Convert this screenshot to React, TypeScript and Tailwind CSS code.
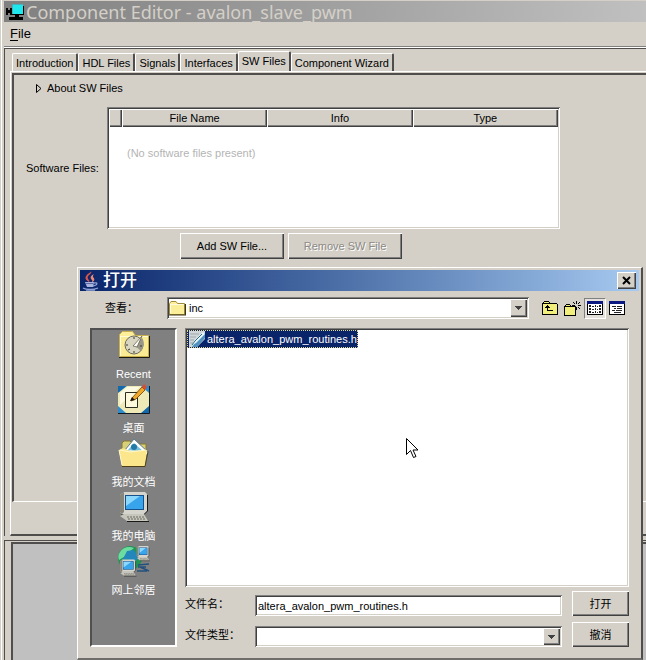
import type { ReactNode } from "react";
import { clsx } from "clsx";

const RAISED =
  "shadow-[inset_1px_1px_0_#fff,inset_-1px_-1px_0_#404040,inset_-2px_-2px_0_#808080]";
const SUNKEN =
  "shadow-[inset_1px_1px_0_#808080,inset_-1px_-1px_0_#fff,inset_2px_2px_0_#404040,inset_-2px_-2px_0_#d4d0c8]";

const tabs = ["Introduction", "HDL Files", "Signals", "Interfaces", "SW Files", "Component Wizard"];

function AppIcon() {
  return (
    <svg width="20" height="20" viewBox="0 0 20 20" shapeRendering="crispEdges" aria-hidden="true">
      <path d="M2 6h2v7H2zM4 8h3v3H4zM6 6h2v7H6zM11 12h4v3h-4zM5 15h14v3H5zM8 12h11v1H8zM19 4h1v9h-1z" fill="#000" />
      <path d="M8 2h11v10H8z" fill="#1ee8ee" />
      <path d="M8 2h11v1H8zM8 2h1v10H8z" fill="#3fb4bc" />
    </svg>
  );
}

function JavaIcon() {
  return (
    <svg width="18" height="20" viewBox="0 0 18 20" fill="none" aria-hidden="true">
      <path d="M9 0c2 3-5 4-3 8 1 1 2 2 1 3-3-2-5-4-2-7 1-2 4-2 4-4z" fill="#e0574a" />
      <path d="M12 3c-4 2-4 4-2 6 1 1 0 2-1 3 4-2 4-4 2-6 0-1 0-2 1-3z" fill="#f08a76" />
      <path d="M3 11h9l-1 5H5z" fill="#a8b4de" />
      <path d="M12 12c4-1 4 2-1 3M1 17c3 2 11 2 15 0M4 19h9" stroke="#8fa0d4" strokeWidth="1.3" />
      <path d="M4 12.500h7" stroke="#5a68a8" />
    </svg>
  );
}

function FolderIcon() {
  return (
    <svg width="17" height="16" viewBox="0 0 17 16" aria-hidden="true">
      <path d="M.5 14.500V3.500l1.500-2h5l1.500 2h7v11z" fill="#ffef9c" stroke="#a08c3c" />
      <path d="M1.500 13.500v-8h13v8z" fill="#fbee98" />
      <path d="M1.500 13V4.500h13" fill="none" stroke="#fffbdc" />
      <path d="M0 15h16.500V4" fill="none" stroke="#3c3414" strokeWidth="1.200" />
    </svg>
  );
}

function HeaderFileIcon() {
  return (
    <svg width="16" height="16" viewBox="0 0 16 16" aria-hidden="true">
      <path d="M0 0h16v8l-8 8H0z" fill="#d0d6d8" />
      <path d="M1 3h9M1 6h6M1 9h4M1 12h3" stroke="#a0a8ac" />
      <path d="M16 2v5l-8 9H3l3-4z" fill="#4f92c0" />
      <path d="M14 1 6 9l-3 5 4-2 9-9z" fill="#e8f6fa" />
      <path d="m13 3-7 7-3 4" stroke="#2a6c8c" fill="none" />
    </svg>
  );
}

function UpFolderIcon() {
  return (
    <svg width="16" height="14" viewBox="0 0 16 14" shapeRendering="crispEdges" aria-hidden="true">
      <path d="M2 0h5v1h1v1h7v1h1v11H0V2h1V1h1z" fill="#000" />
      <path d="M2 1h5v1H2zM1 3h14v10H1z" fill="#f2ee7c" />
      <path d="M5 4h1v1h1v1h1v1H6v2h5v1H5V7H3V6h1V5h1z" fill="#000" />
    </svg>
  );
}

function NewFolderIcon() {
  return (
    <svg width="17" height="15" viewBox="0 0 17 15" shapeRendering="crispEdges" aria-hidden="true">
      <path d="M2 3h4v1h1v1h5v10H0V5h1V4h1z" fill="#000" />
      <path d="M2 4h4v1H2zM1 6h10v8H1z" fill="#f2ee7c" />
      <path
        d="M12 0h1v3h-1zM12 6h1v3h-1zM8 4h3v1H8zM14 4h3v1h-3zM9 1h1v1H9zM10 2h1v1h-1zM15 1h1v1h-1zM14 2h1v1h-1zM14 6h1v1h-1zM15 7h1v1h-1z"
        fill="#000"
      />
    </svg>
  );
}

function ListIcon() {
  return (
    <svg width="16" height="14" viewBox="0 0 16 14" shapeRendering="crispEdges" aria-hidden="true">
      <path d="M0 0h16v14H0z" fill="#000" />
      <path d="M1 3h14v10H1z" fill="#fff" />
      <path d="M0 0h16v3H0z" fill="#0a1a80" />
      <path
        d="M2 4h2v2H2zM5 5h2v1H5zM8 4h1v2H8zM10 5h1v1h-1zM12 4h2v2h-2zM2 7h2v2H2zM5 8h2v1H5zM8 7h1v2H8zM10 8h1v1h-1zM12 7h2v2h-2zM2 10h2v2H2zM5 11h2v1H5zM8 10h1v2H8zM10 11h1v1h-1zM12 10h2v2h-2z"
        fill="#222"
      />
    </svg>
  );
}

function DetailsIcon() {
  return (
    <svg width="16" height="14" viewBox="0 0 16 14" shapeRendering="crispEdges" aria-hidden="true">
      <path d="M0 0h16v14H0z" fill="#000" />
      <path d="M1 3h14v10H1z" fill="#fff" />
      <path d="M0 0h16v3H0z" fill="#0a1a80" />
      <path d="M3 5h4v1H3zM8 5h5v1H8zM5 7h2v1H5zM8 7h5v1H8zM3 9h3v1H3zM7 9h6v1H7zM5 11h7v1H5z" fill="#222" />
    </svg>
  );
}

function RecentIcon() {
  return (
    <svg width="32" height="32" viewBox="0 0 32 32" aria-hidden="true">
      <path d="M1.500 26.500V4.500l3-3h10l3 4h13v21z" fill="#ffee9a" stroke="#c8b04c" />
      <path d="M2 6h28v20H2z" fill="#fbec94" />
      <path d="M2 6.500h28M2.500 6v20" stroke="#fffbd8" fill="none" />
      <path d="M1 27.500h30.500V6" fill="none" stroke="#1c1a10" />
      <circle cx="16" cy="15" r="9" fill="#d8d6c0" stroke="#6c6a5c" />
      <path d="m16 15 8-7c3 4 2 9-1 13z" fill="#98978a" />
      <path d="m15 16 9-10-5 11z" fill="#fffef0" stroke="#58564c" strokeWidth=".7" />
      <path d="M8 15h2M16 21v2M22 16h2M16 7v2M10 20l2-1" stroke="#383830" />
    </svg>
  );
}

function DesktopIcon() {
  return (
    <svg width="32" height="32" viewBox="0 0 32 32" aria-hidden="true">
      <path d="M0 2h31v27H0z" fill="#2f8ccc" />
      <path d="M0 2h8L0 10zM31 21v8h-8z" fill="#1468ac" />
      <path d="M9 2h14l8 7v13l-8 7H8l-8-7V9z" fill="#efe9b8" />
      <path d="M9 3h13L2 21V9z" fill="#fbf9e2" />
      <path d="M7.500 8.500h12v15h-12z" fill="#fcf9dc" stroke="#2c2c20" />
      <path d="m14 14 10-11 3 3-9 9-5 2z" fill="#f0a828" stroke="#6c3c08" strokeWidth=".8" />
      <path d="m24 3 2-3 3 3-2 3z" fill="#d84c30" />
      <path d="m12 17 2-4 3 3z" fill="#181410" />
      <path d="M0 29.500h31.500V2" fill="none" stroke="#101820" />
    </svg>
  );
}

function DocumentsIcon() {
  return (
    <svg width="32" height="32" viewBox="0 0 32 32" aria-hidden="true">
      <path d="M4 12V5l2-2h6l3 3h13v9z" fill="#d8d078" stroke="#88782c" />
      <path d="M7 12 16 1l15 14-4 3z" fill="#fff" stroke="#5c7c94" />
      <path d="m10 12 6-7 10 9z" fill="#78c0e0" />
      <circle cx="16" cy="9" r="3" fill="#237aa8" />
      <path d="m1 12 4-2 7 3 17-1-2 16H4z" fill="#fbe68c" />
      <path d="m1 12 3 15M2 12l10 2 16-2" fill="none" stroke="#fffad0" />
      <path d="M4 28.500h23l3-15" fill="none" stroke="#4c4014" />
    </svg>
  );
}

function Monitor() {
  return (
    <>
      <path d="M2 3 6 0h21l2 2v17l-3 3H4l-2-2z" fill="#d5d5cd" />
      <path d="M2 3 6 0v20l-2 2-2-2z" fill="#85857c" />
      <path d="M7 3h19v15H7z" fill="#16518c" />
      <path d="M8 4h17v13H8z" fill="#38a4ec" />
      <path d="M8 4h14L8 14z" fill="#8cd8fc" />
      <path d="M3 22h24v3H3z" fill="#54544c" />
      <path d="m2 24 4-2h20l4 7H9z" fill="#c6c6bc" />
      <path d="M9 25h17M10 27h18" stroke="#686860" strokeDasharray="2 1" />
      <path d="M9 29.500h22M29.500 3v16l-3 3" stroke="#181818" fill="none" />
    </>
  );
}

function ComputerIcon() {
  return (
    <svg width="32" height="32" viewBox="0 0 32 32" aria-hidden="true">
      <Monitor />
    </svg>
  );
}

function NetworkIcon() {
  return (
    <svg width="32" height="32" viewBox="0 0 32 32" aria-hidden="true">
      <circle cx="12" cy="12" r="12" fill="#239454" />
      <path d="M2 6c3-5 9-6 14-4l-5 4-5 5-5 3c-1-3-1-5 1-8z" fill="#6cdca0" />
      <path d="m9 5 7-1 5 8-6 5-6-4-5 2 3-6z" fill="#2387bc" />
      <svg x="18" y="0" width="14" height="16" viewBox="0 0 32 32" preserveAspectRatio="none">
        <Monitor />
      </svg>
      <svg x="1" y="13" width="18" height="19" viewBox="0 0 32 32">
        <Monitor />
      </svg>
      <path d="m20 19 11-1M20 21h8M22 21l9 4M19 25h10" fill="none" stroke="#23507c" strokeWidth="1.500" />
    </svg>
  );
}

function ArrowBox() {
  return (
    <span
      aria-hidden="true"
      className={clsx("pointer-events-none flex w-[17px] shrink-0 items-center justify-center self-stretch bg-[#d4d0c8]", RAISED)}
    >
      <svg width="7" height="4" viewBox="0 0 7 4" shapeRendering="crispEdges">
        <path d="M0 0h7v1H6v1H5v1H4v1H3V3H2V2H1V1H0z" fill="#404040" />
      </svg>
    </span>
  );
}

function PushButton({ children, className, disabled }: { children: ReactNode; className?: string; disabled?: boolean }) {
  return (
    <button
      type="button"
      disabled={disabled}
      className={clsx(
        "bg-[#d4d0c8] text-center",
        RAISED,
        disabled && "text-[#8c8a84] [text-shadow:1px_1px_0_#fff]",
        className
      )}
    >
      {children}
    </button>
  );
}

const places = [
  { label: "Recent", icon: <RecentIcon /> },
  { label: "桌面", icon: <DesktopIcon /> },
  { label: "我的文档", icon: <DocumentsIcon /> },
  { label: "我的电脑", icon: <ComputerIcon /> },
  { label: "网上邻居", icon: <NetworkIcon /> },
];

function OpenDialog() {
  return (
    <div
      role="dialog"
      aria-labelledby="dialog-title"
      className="absolute bottom-0 left-[77px] right-[3px] top-[267px] flex flex-col border-b-2 border-l border-r-2 border-t border-b-[#706e6a] border-l-white border-r-[#504e4c] border-t-white bg-[#d4d0c8] px-[2px] pt-[2px]"
    >
      <div className="flex h-[21px] items-center bg-linear-to-r from-[#0a246a] to-[#a6caf0] pl-[2px] pr-[3px]">
        <JavaIcon />
        <h2 id="dialog-title" className="ml-[3px] flex-1 text-[17px] leading-5 font-medium text-white">
          打开
        </h2>
        <button
          type="button"
          aria-label="Close"
          className={clsx("flex h-[17px] w-[19px] items-center justify-center bg-[#d4d0c8]", RAISED)}
        >
          <svg width="9" height="9" viewBox="0 0 9 9" aria-hidden="true">
            <path d="m1 1 7 7M8 1 1 8" stroke="#000" strokeWidth="2" />
          </svg>
        </button>
      </div>

      <div className="mt-[6px] flex items-center pl-[25px] pr-[14px]">
        <label htmlFor="look-in" className="w-[62px]">
          查看：
        </label>
        <div className={clsx("flex h-[22px] flex-1 items-center bg-white p-[2px]", SUNKEN)}>
          <FolderIcon />
          <select id="look-in" className="ml-[3px] min-w-0 flex-1 appearance-none bg-transparent outline-none">
            <option>inc</option>
          </select>
          <ArrowBox />
        </div>
        <div className="ml-[13px] flex h-[22px] items-center">
          <button type="button" aria-label="Up one level" className="flex w-[16px] justify-center">
            <UpFolderIcon />
          </button>
          <button type="button" aria-label="New folder" className="ml-[6px] flex w-[17px] justify-center">
            <NewFolderIcon />
          </button>
          <button
            type="button"
            aria-label="List"
            aria-pressed="true"
            className="ml-[3px] flex h-[21px] w-[22px] items-center justify-center border border-b-white border-l-[#808080] border-r-white border-t-[#808080] bg-[#e4e1dc]"
          >
            <ListIcon />
          </button>
          <button type="button" aria-label="Details" className="ml-[3px] flex w-[16px] justify-center">
            <DetailsIcon />
          </button>
        </div>
      </div>

      <div className="mt-[9px] mb-[11px] flex min-h-0 flex-1 gap-2 pl-[10px] pr-[10px]">
        <nav
          aria-label="Places"
          className="flex w-[87px] shrink-0 flex-col border-2 border-b-white border-l-[#505050] border-r-white border-t-[#505050] bg-[#808080] text-white"
        >
          {places.map((place) => (
            <button key={place.label} type="button" className="flex h-[54px] flex-col items-center">
              {place.icon}
              <span className="mt-[4px] leading-4">{place.label}</span>
            </button>
          ))}
        </nav>

        <div className="flex min-w-0 flex-1 flex-col">
          <div role="listbox" aria-label="Files" className={clsx("flex-1 bg-white p-[2px]", SUNKEN)}>
            <div
              role="option"
              aria-selected="true"
              className="flex h-[18px] w-fit items-center border border-dotted border-[#e0d890] bg-[#0a246a] pl-[1px] text-white"
            >
              <HeaderFileIcon />
              <span className="ml-[2px]">altera_avalon_pwm_routines.h</span>
            </div>
          </div>

          <form className="mt-[4px] flex flex-col gap-[6px]" onSubmit={(e) => e.preventDefault()}>
            <div className="flex items-end">
              <label htmlFor="file-name" className="w-[70px] leading-6">
                文件名：
              </label>
              <input
                id="file-name"
                type="text"
                defaultValue="altera_avalon_pwm_routines.h"
                className={clsx("h-[21px] min-w-0 flex-1 bg-white px-[3px] outline-none", SUNKEN)}
              />
              <PushButton className="ml-[10px] h-[25px] w-[57px]">打开</PushButton>
            </div>
            <div className="flex items-end">
              <label htmlFor="file-type" className="w-[70px] leading-6">
                文件类型：
              </label>
              <div className={clsx("flex h-[21px] min-w-0 flex-1 items-center bg-white p-[2px]", SUNKEN)}>
                <select id="file-type" className="min-w-0 flex-1 appearance-none bg-transparent outline-none">
                  <option></option>
                </select>
                <ArrowBox />
              </div>
              <PushButton className="ml-[10px] h-[25px] w-[57px]">撤消</PushButton>
            </div>
          </form>
        </div>
      </div>
    </div>
  );
}

function SoftwareFiles() {
  return (
    <div className="flex-1 border-b border-l-2 border-t-2 border-b-white border-l-[#504e4c] border-t-[#504e4c]">
      <button type="button" className="ml-[22px] mt-[5px] flex h-4 items-center gap-[5px]">
        <svg width="6" height="9" viewBox="0 0 6 9" aria-hidden="true">
          <path d="M.5.500v8l4.500-4z" fill="none" stroke="#000" />
        </svg>
        About SW Files
      </button>

      <div className="mt-[11px] flex items-center pl-[12px] pr-[86px]">
        <span id="files-label" className="w-[81px] shrink-0">
          Software Files:
        </span>
        <div className={clsx("h-[122px] min-w-0 flex-1 bg-white p-[2px]", SUNKEN)}>
          <table aria-labelledby="files-label" className="w-full table-fixed border-collapse">
            <thead>
              <tr className="h-[18px] bg-[#d4d0c8]">
                <th aria-label="Marker" className={clsx("w-[13px]", RAISED)}></th>
                <th className={clsx("font-normal", RAISED)}>File Name</th>
                <th className={clsx("font-normal", RAISED)}>Info</th>
                <th className={clsx("font-normal", RAISED)}>Type</th>
              </tr>
            </thead>
            <tbody>
              <tr>
                <td colSpan={4} className="pl-[18px] pt-[18px] text-[#b4b4b4]">
                  (No software files present)
                </td>
              </tr>
            </tbody>
          </table>
        </div>
      </div>

      <div className="mt-[4px] flex gap-[4px] pl-[166px]">
        <PushButton className="h-[26px] w-[104px]">Add SW File...</PushButton>
        <PushButton className="h-[26px] w-[114px]" disabled>
          Remove SW File
        </PushButton>
      </div>
    </div>
  );
}

export default function App() {
  return (
    <div className="relative flex h-screen min-h-[600px] flex-col overflow-hidden bg-[#d4d0c8] pl-[1px] font-['Liberation_Sans','Noto_Sans_CJK_SC',sans-serif] text-[11px] leading-4 text-black">
      <div className="flex flex-1 flex-col border-l border-white pl-[2px] pt-[1px]">
        <header className="flex h-[21px] items-center bg-linear-to-r from-[#808080] to-[#c0c0c0]">
          <AppIcon />
          <h1 className="ml-[2px] font-['Noto_Sans',sans-serif] text-[18px] leading-5 whitespace-nowrap text-[#d4d0c8]">
            Component Editor - avalon_slave_pwm
          </h1>
        </header>

        <nav className="flex h-[24px] items-center pl-[6px]">
          <button type="button" className="text-[13px]">
            <span className="underline underline-offset-2">F</span>ile
          </button>
        </nav>

        <main className="flex flex-1 flex-col border-t border-[#808080]">
          <div className="flex flex-1 flex-col border-t border-white">
            <div className="flex flex-1 flex-col border-l border-t border-[#504e4c] pl-[5px] pt-[2px]">
              <div role="tablist" className="flex h-[20px] items-end pl-[2px]">
                {tabs.map((tab) => {
                  const active = tab === "SW Files";
                  return (
                    <button
                      key={tab}
                      type="button"
                      role="tab"
                      aria-selected={active}
                      className={clsx(
                        "rounded-t-[2px] border-l border-r-2 border-t border-l-white border-r-[#504e4c] border-t-white px-[3px] whitespace-nowrap",
                        active ? "h-[20px] pb-[2px]" : "h-[18px]"
                      )}
                    >
                      {tab}
                    </button>
                  );
                })}
              </div>
              <div className="flex flex-1 flex-col border-b-2 border-l border-t border-b-[#504e4c] border-l-white border-t-white pb-[32px] pl-[1px] pt-[1px]">
                <SoftwareFiles />
              </div>
            </div>
          </div>
        </main>

        <section
          aria-label="Messages"
          className="mt-[4px] h-[120px] border-l border-t border-[#504e4c] pl-[6px] pt-[1px]"
        >
          <div className="h-full border-l-2 border-t-2 border-[#504e4c] bg-[#c0c0c0]"></div>
        </section>
      </div>

      <OpenDialog />

      <svg
        width="13"
        height="21"
        viewBox="0 0 13 21"
        aria-hidden="true"
        className="pointer-events-none absolute left-[406px] top-[438px]"
      >
        <path d="M.5.500v16l4-4 3 7 2.500-1-3-6.500h5z" fill="#fff" stroke="#000" />
      </svg>
    </div>
  );
}
